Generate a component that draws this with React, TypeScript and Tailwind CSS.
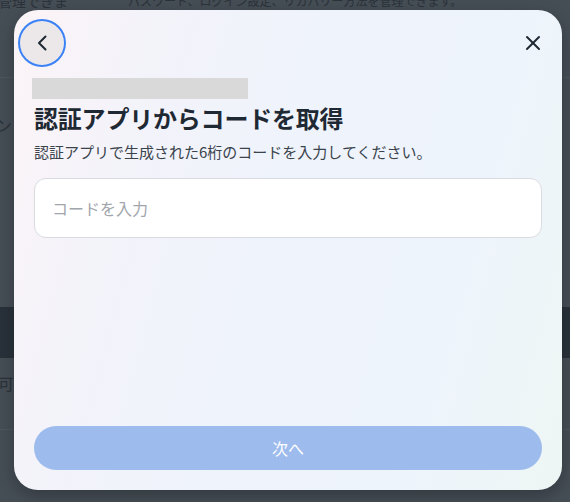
import React, { useState } from 'react';
import { X } from 'lucide-react';

const font = { fontFamily: '"Noto Sans CJK JP", "Noto Sans", sans-serif' };

function BackgroundPage() {
  return (
    <div className="flex flex-col w-full h-full text-[#2b3239]">
      <div className="flex items-start -mt-[9px] h-[20px] text-[14px] leading-[20px]">
        <span className="w-[130px] -ml-[2px]">管理できま</span>
        <span className="text-[12px]">パスワード、ログイン設定、リカバリー方法を管理できます。</span>
      </div>
      <div className="h-[66px]" />
      <div className="h-px bg-[#4d555d]" />
      <div className="h-[57px] flex items-end text-[16px] leading-[20px] -ml-[4px]">ン</div>
      <div className="h-[172px]" />
      <div className="h-[51px] bg-[#28313a]" />
      <div className="h-[71px] pt-[15px] text-[16px] leading-[20px] -ml-[18px]">許可</div>
      <div className="h-px bg-[#4d555d]" />
    </div>
  );
}

export default function App() {
  const [code, setCode] = useState('');

  return (
    <div className="relative w-[570px] h-[502px] overflow-hidden bg-[#454d55]" style={font}>
      <BackgroundPage />

      <div className="absolute inset-0 flex items-start pt-[10px] pl-[14px]">
        <div className="w-[548px] h-[480px] rounded-[24px] shadow-[0_6px_16px_rgba(0,0,0,0.25)] bg-[linear-gradient(105deg,#fcf4f7_0%,#f3f3fa_22%,#eff3fb_45%,#eef4fc_75%,#eef6f4_100%)] flex flex-col px-5 pb-5">
          <div className="flex items-center justify-between h-[64px] pt-[1px] -mx-[14px]">
            <button className="w-[44px] h-[44px] rounded-full bg-[#ece8e9] ring-2 ring-[#3b82f6] flex items-center justify-center text-[#1f2933]">
              <svg width="24" height="24" viewBox="0 0 24 24" fill="none" stroke="currentColor" strokeWidth="2" strokeLinecap="round" strokeLinejoin="round">
                <path d="M15.5 5.5 9 12l6.5 6.5" />
              </svg>
            </button>
            <button className="w-[44px] h-[44px] flex items-center justify-center text-[#1f2933] mr-[1px]">
              <X size={24} strokeWidth={2} />
            </button>
          </div>

          <div className="w-[216px] h-[21px] bg-[#d9d9d9] -ml-[2px] mt-[4px]" />

          <h2 className="mt-[2px] text-[24px] leading-[34px] font-bold text-[#1f2933] tracking-[-0.2px]">
            認証アプリからコードを取得
          </h2>
          <p className="mt-[6px] text-[15px] leading-[22px] text-[#3a434c]">
            認証アプリで生成された6桁のコードを入力してください。
          </p>

          <input
            value={code}
            onChange={e => setCode(e.target.value)}
            placeholder="コードを入力"
            className="mt-[15px] h-[60px] w-full rounded-[12px] border border-[#d8dbe0] bg-white px-[17px] text-[16px] text-[#1f2933] placeholder:text-[#a2a6ac] outline-none"
          />

          <div className="flex-1" />

          <button
            disabled
            className="h-[44px] w-full rounded-full bg-[#9dbbec] text-white text-[16px] flex items-center justify-center"
          >
            次へ
          </button>
        </div>
      </div>
    </div>
  );
}
